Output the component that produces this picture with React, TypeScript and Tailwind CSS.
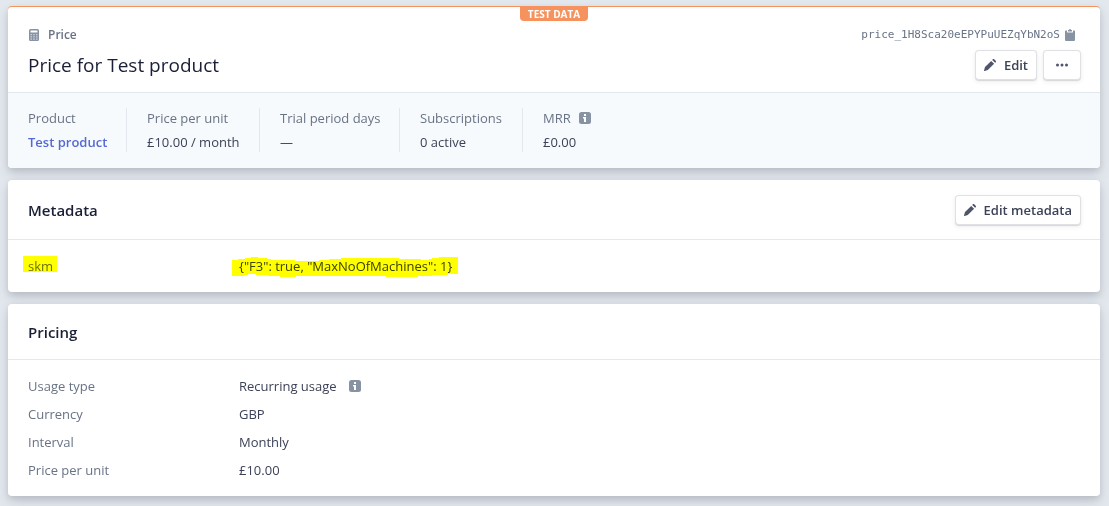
import type { ReactNode } from "react";

function CalculatorIcon() {
  return (
    <svg width="12" height="14" viewBox="0 0 12 14" aria-hidden="true">
      <path
        fill="#8792a2"
        fillRule="evenodd"
        d="M2.500 1h7A1.500 1.500 0 0 1 11 2.500v9A1.500 1.500 0 0 1 9.500 13h-7A1.500 1.500 0 0 1 1 11.500v-9A1.500 1.500 0 0 1 2.500 1zM2.500 2.500v2h7v-2z"
      />
      <path
        fill="#d3d9e1"
        d="M2.500 6h1.400v1.300H2.500zM5.300 6h1.400v1.300H5.300zM8.100 6h1.400v1.300H8.100zM2.500 8.200h1.400v1.300H2.500zM5.300 8.200h1.400v1.300H5.300zM8.100 8.200h1.400v1.300H8.100zM2.500 10.400h1.400v1.300H2.500zM5.300 10.400h1.400v1.300H5.300zM8.100 10.400h1.400v1.300H8.100z"
      />
    </svg>
  );
}

function ClipboardIcon() {
  return (
    <svg width="10" height="12" viewBox="0 0 10 12" aria-hidden="true">
      <path
        fill="#8792a2"
        d="M1 1.500h1V3a.6.6 0 0 0 .6.6h4.800A.6.6 0 0 0 8 3V1.500h1a1 1 0 0 1 1 1V11a1 1 0 0 1-1 1H1a1 1 0 0 1-1-1V2.500a1 1 0 0 1 1-1z"
      />
      <path fill="#8792a2" d="M3 1h1a1 1 0 0 1 2 0h1v1.500H3z" />
    </svg>
  );
}

function PencilIcon() {
  return (
    <svg width="12" height="12" viewBox="0 0 12 12" aria-hidden="true">
      <path
        fill="#4f566b"
        d="M7.200 1.900l2.900 2.900-6.300 6.200L.6 12a.5.5 0 0 1-.6-.6l1-3.300zM8.200.9L8.800.3a1 1 0 0 1 1.400 0l1.500 1.500a1 1 0 0 1 0 1.400l-.6.6z"
      />
    </svg>
  );
}

function InfoIcon() {
  return (
    <svg width="12" height="12" viewBox="0 0 12 12" aria-hidden="true">
      <rect width="12" height="12" rx="2.500" fill="#8792a2" />
      <path fill="#fff" d="M5 2h2v2H5zM4 5h3v5H5V6.500H4z" />
    </svg>
  );
}

function DotsIcon() {
  return (
    <svg width="12" height="4" viewBox="0 0 12 4" fill="#4f566b" aria-hidden="true">
      <circle cx="1.500" cy="2" r="1.500" />
      <circle cx="6" cy="2" r="1.500" />
      <circle cx="10.500" cy="2" r="1.500" />
    </svg>
  );
}

function Button({ children, label }: { children: ReactNode; label?: string }) {
  return (
    <button
      type="button"
      aria-label={label}
      className="flex h-[30px] min-w-[38px] cursor-pointer items-center justify-center gap-2 rounded-[4px] bg-white px-[9px] text-[13px] font-semibold text-[#3c4257] shadow-[0_0_0_1px_rgba(60,66,87,0.16)_inset,0_1px_1px_rgba(0,0,0,0.12),0_2px_5px_rgba(60,66,87,0.08)]"
    >
      {children}
    </button>
  );
}

function Card({ children, accent }: { children: ReactNode; accent?: boolean }) {
  return (
    <section
      className={
        accent
          ? "relative rounded-[4px] border-t border-[#f5925e] bg-white shadow-[0_7px_14px_rgba(60,66,87,0.12),0_3px_6px_rgba(0,0,0,0.12)]"
          : "relative rounded-[4px] bg-white shadow-[0_7px_14px_rgba(60,66,87,0.12),0_3px_6px_rgba(0,0,0,0.12)]"
      }
    >
      {children}
    </section>
  );
}

function Stat({ label, children, className }: { label: ReactNode; children: ReactNode; className: string }) {
  return (
    <div className={className}>
      <dt className="flex items-center gap-2 text-[#697386]">{label}</dt>
      <dd>{children}</dd>
    </div>
  );
}

function Row({ label, children }: { label: ReactNode; children: ReactNode }) {
  return (
    <div className="flex">
      <dt className="w-[211px] shrink-0 text-[#697386]">{label}</dt>
      <dd className="flex items-center gap-3">{children}</dd>
    </div>
  );
}

export default function App() {
  return (
    <main className="flex min-h-screen flex-col gap-3 bg-[#e3e8ee] pt-[6px] pr-[9px] pb-[10px] pl-2 font-['Open_Sans','Noto_Sans',sans-serif] text-[13px] leading-5 text-[#3c4257]">
      <Card accent>
        <div className="absolute inset-x-0 top-0 flex justify-center">
          <span className="rounded-b-[4px] bg-[#f5925e] px-2 text-[10px] leading-[14px] font-bold text-white">TEST DATA</span>
        </div>
        <header className="flex flex-col gap-[5px] pt-[18px] pr-[19px] pb-3 pl-5">
          <div className="flex items-center justify-between">
            <div className="flex items-center gap-2 font-semibold text-[#697386]">
              <CalculatorIcon />
              <span className="text-[12px]">Price</span>
            </div>
            <button
              type="button"
              aria-label="Copy price ID"
              className="flex cursor-pointer items-center gap-[5px] pr-[6px] font-['DejaVu_Sans_Mono',monospace] text-[11px] text-[#697386]"
            >
              price_1H8Sca20eEPYPuUEZqYbN2oS
              <ClipboardIcon />
            </button>
          </div>
          <div className="flex items-center justify-between">
            <h1 className="text-[19px] text-[#1a1f36]">Price for Test product</h1>
            <div className="flex gap-[6px]">
              <Button>
                <PencilIcon />
                Edit
              </Button>
              <Button label="More actions">
                <DotsIcon />
              </Button>
            </div>
          </div>
        </header>
        <dl className="flex rounded-b-[4px] border-t border-[#e3e8ee] bg-[#f7fafc] px-5 pt-[15px] pb-4">
          <Stat label="Product" className="flex w-[99px] flex-col gap-1 border-r border-[#e3e8ee]">
            <a href="#product" className="font-semibold text-[#5469d4]">Test product</a>
          </Stat>
          <Stat label="Price per unit" className="flex w-[133px] flex-col gap-1 border-r border-[#e3e8ee] pl-5">
            £10.00 / month
          </Stat>
          <Stat label="Trial period days" className="flex w-[140px] flex-col gap-1 border-r border-[#e3e8ee] pl-5">
            —
          </Stat>
          <Stat label="Subscriptions" className="flex w-[123px] flex-col gap-1 border-r border-[#e3e8ee] pl-5">
            0 active
          </Stat>
          <Stat label={<>MRR <InfoIcon /></>} className="flex flex-col gap-1 pl-5">
            £0.00
          </Stat>
        </dl>
      </Card>

      <Card>
        <header className="flex h-[60px] items-center justify-between border-b border-[#e3e8ee] pr-[19px] pl-5">
          <h2 className="text-[15px] font-semibold text-[#1a1f36]">Metadata</h2>
          <Button>
            <PencilIcon />
            Edit metadata
          </Button>
        </header>
        <dl className="px-5 py-4">
          <Row
            label={
              <span className="relative inline-block">
                skm
                <span className="absolute top-0 -left-[5px] h-4 w-[34px] bg-[#ffff00] mix-blend-multiply" />
              </span>
            }
          >
            <span className="relative">
              {'{"F3": true, "MaxNoOfMachines": 1}'}
              <svg
                className="absolute top-0 -left-[7px] h-[22px] w-[226px] mix-blend-multiply"
                viewBox="0 0 226 22"
                aria-hidden="true"
              >
                <path
                  fill="#ffff00"
                  d="M0 4h6V3h7V2h6V1h7v1h9v1h4v1h24v1h24V4h10V3h12V2h58v1h22v1h8V3h3V2h7V1h19v17h-10v1h-16v1h-14v1h-32v-1H64v1H48v-1H36v-1H24v-1h-8v1h-3v1H0z"
                />
              </svg>
            </span>
          </Row>
        </dl>
      </Card>

      <Card>
        <header className="flex h-14 items-center border-b border-[#e3e8ee] px-5">
          <h2 className="text-[15px] font-semibold text-[#1a1f36]">Pricing</h2>
        </header>
        <dl className="flex flex-col gap-2 px-5 py-4">
          <Row label="Usage type">
            Recurring usage <InfoIcon />
          </Row>
          <Row label="Currency">GBP</Row>
          <Row label="Interval">Monthly</Row>
          <Row label="Price per unit">£10.00</Row>
        </dl>
      </Card>
    </main>
  );
}
